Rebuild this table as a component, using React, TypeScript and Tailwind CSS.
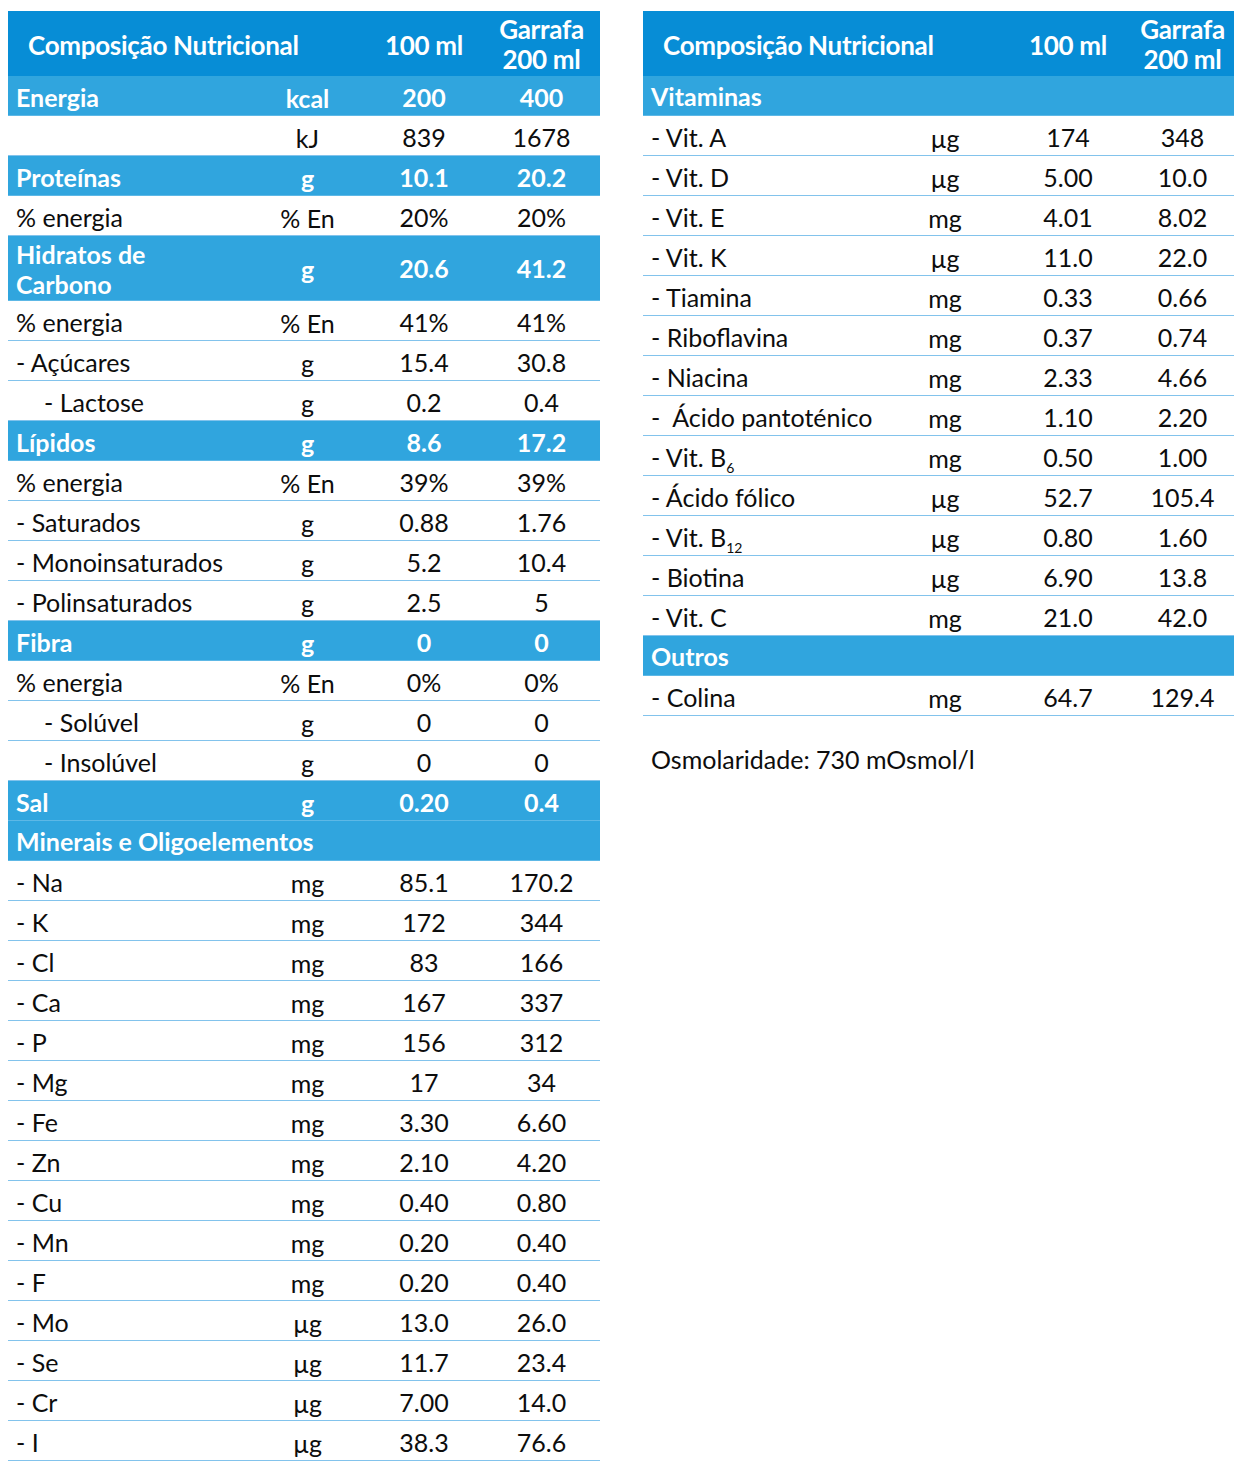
import React from 'react';

type Row = {
  label: React.ReactNode;
  unit?: string;
  a?: string;
  b?: string;
  kind?: 'section' | 'plain';
  indent?: boolean;
  tall?: boolean;
};

const leftRows: Row[] = [
  { label: 'Energia', unit: 'kcal', a: '200', b: '400', kind: 'section' },
  { label: '', unit: 'kJ', a: '839', b: '1678' },
  { label: 'Proteínas', unit: 'g', a: '10.1', b: '20.2', kind: 'section' },
  { label: '% energia', unit: '% En', a: '20%', b: '20%' },
  { label: <>Hidratos de<br />Carbono</>, unit: 'g', a: '20.6', b: '41.2', kind: 'section', tall: true },
  { label: '% energia', unit: '% En', a: '41%', b: '41%' },
  { label: '- Açúcares', unit: 'g', a: '15.4', b: '30.8' },
  { label: '- Lactose', unit: 'g', a: '0.2', b: '0.4', indent: true },
  { label: 'Lípidos', unit: 'g', a: '8.6', b: '17.2', kind: 'section' },
  { label: '% energia', unit: '% En', a: '39%', b: '39%' },
  { label: '- Saturados', unit: 'g', a: '0.88', b: '1.76' },
  { label: '- Monoinsaturados', unit: 'g', a: '5.2', b: '10.4' },
  { label: '- Polinsaturados', unit: 'g', a: '2.5', b: '5' },
  { label: 'Fibra', unit: 'g', a: '0', b: '0', kind: 'section' },
  { label: '% energia', unit: '% En', a: '0%', b: '0%' },
  { label: '- Solúvel', unit: 'g', a: '0', b: '0', indent: true },
  { label: '- Insolúvel', unit: 'g', a: '0', b: '0', indent: true },
  { label: 'Sal', unit: 'g', a: '0.20', b: '0.4', kind: 'section' },
  { label: 'Minerais e Oligoelementos', kind: 'section' },
  { label: '- Na', unit: 'mg', a: '85.1', b: '170.2' },
  { label: '- K', unit: 'mg', a: '172', b: '344' },
  { label: '- Cl', unit: 'mg', a: '83', b: '166' },
  { label: '- Ca', unit: 'mg', a: '167', b: '337' },
  { label: '- P', unit: 'mg', a: '156', b: '312' },
  { label: '- Mg', unit: 'mg', a: '17', b: '34' },
  { label: '- Fe', unit: 'mg', a: '3.30', b: '6.60' },
  { label: '- Zn', unit: 'mg', a: '2.10', b: '4.20' },
  { label: '- Cu', unit: 'mg', a: '0.40', b: '0.80' },
  { label: '- Mn', unit: 'mg', a: '0.20', b: '0.40' },
  { label: '- F', unit: 'mg', a: '0.20', b: '0.40' },
  { label: '- Mo', unit: 'µg', a: '13.0', b: '26.0' },
  { label: '- Se', unit: 'µg', a: '11.7', b: '23.4' },
  { label: '- Cr', unit: 'µg', a: '7.00', b: '14.0' },
  { label: '- I', unit: 'µg', a: '38.3', b: '76.6' },
];

const rightRows: Row[] = [
  { label: 'Vitaminas', kind: 'section' },
  { label: '- Vit. A', unit: 'µg', a: '174', b: '348' },
  { label: '- Vit. D', unit: 'µg', a: '5.00', b: '10.0' },
  { label: '- Vit. E', unit: 'mg', a: '4.01', b: '8.02' },
  { label: '- Vit. K', unit: 'µg', a: '11.0', b: '22.0' },
  { label: '- Tiamina', unit: 'mg', a: '0.33', b: '0.66' },
  { label: '- Riboflavina', unit: 'mg', a: '0.37', b: '0.74' },
  { label: '- Niacina', unit: 'mg', a: '2.33', b: '4.66' },
  { label: '-\u00a0 Ácido pantoténico', unit: 'mg', a: '1.10', b: '2.20' },
  { label: <>- Vit. B<sub className="text-[14px] relative top-[6px] align-baseline">6</sub></>, unit: 'mg', a: '0.50', b: '1.00' },
  { label: '- Ácido fólico', unit: 'µg', a: '52.7', b: '105.4' },
  { label: <>- Vit. B<sub className="text-[14px] relative top-[6px] align-baseline">12</sub></>, unit: 'µg', a: '0.80', b: '1.60' },
  { label: '- Biotina', unit: 'µg', a: '6.90', b: '13.8' },
  { label: '- Vit. C', unit: 'mg', a: '21.0', b: '42.0' },
  { label: 'Outros', kind: 'section' },
  { label: '- Colina', unit: 'mg', a: '64.7', b: '129.4' },
];

function Table({ rows, cols }: { rows: Row[]; cols: string }) {
  return (
    <div className="flex flex-col">
      {/* Header */}
      <div className={`grid ${cols} h-[65px] bg-[#078dd6] text-white font-bold text-[26px] tracking-[-0.3px]`}>
        <div className="flex items-center pl-5 pt-1 col-span-2">Composição Nutricional</div>
        <div className="flex items-center justify-center pt-1">100 ml</div>
        <div className="flex flex-col items-center justify-center leading-[30px]">
          <span>Garrafa</span>
          <span>200 ml</span>
        </div>
      </div>
      {rows.map((r, i) => {
        const section = r.kind === 'section';
        return (
          <div
            key={i}
            className={`grid ${cols} ${r.tall ? 'h-[65px]' : 'h-[40px]'} border-b text-[25px] ${
              section
                ? 'bg-[#30a5de] text-white font-bold border-[#5db8e6]'
                : 'text-[#0d0d0d] border-[#82c3ec]'
            }`}
          >
            <div className={`flex items-center pt-[2px] ${r.indent ? 'pl-9' : 'pl-2'} ${r.tall ? 'leading-[30px]' : ''} whitespace-nowrap`}>
              <span>{r.label}</span>
            </div>
            <div className="flex items-center justify-center pt-[4px]">{r.unit}</div>
            <div className="flex items-center justify-center pt-[2px]">{r.a}</div>
            <div className="flex items-center justify-center pt-[2px]">{r.b}</div>
          </div>
        );
      })}
    </div>
  );
}

export default function App() {
  return (
    <div className="w-[1244px] h-[1474px] bg-white pt-[11px] pl-[8px] flex gap-[43px] font-['Lato','Noto_Sans',sans-serif]">
      <div className="w-[592px]">
        <Table rows={leftRows} cols="grid-cols-[242px_115px_118px_117px]" />
      </div>
      <div className="w-[591px] flex flex-col">
        <Table rows={rightRows} cols="grid-cols-[242px_120px_126px_103px]" />
        <div className="pl-2 mt-[25px] text-[25px] text-[#0d0d0d]">Osmolaridade: 730 mOsmol/l</div>
      </div>
    </div>
  );
}
